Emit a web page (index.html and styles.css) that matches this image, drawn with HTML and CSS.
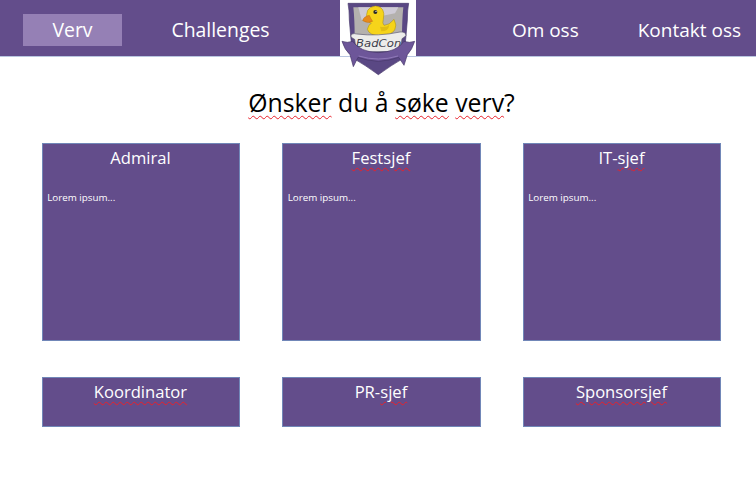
FILE: index.html
```html
<!DOCTYPE html>
<html lang="nb">
<head>
    <meta charset="UTF-8">
    <meta name="viewport" content="width=device-width, initial-scale=1.0">
    <title>BadCon Verv</title>
    <link rel="stylesheet" href="styles.css">
</head>
<body>
    <header class="topbar">
        <nav class="nav-left">
            <a class="nav-item active" href="#">Verv</a>
            <a class="nav-item" href="#">Challenges</a>
        </nav>
        <div class="logo">
            <svg class="logo-mark" viewBox="30 0 228 228" aria-label="BadCon">
                <path d="M145 224 Q105 195 70 175 Q62 120 58 60 Q58 30 54 10 L236 10 Q232 30 232 60 Q228 120 220 175 Q185 195 145 224 Z" fill="#5a4884" stroke="#453669" stroke-width="2"/>
                <path d="M70 22 L220 22 Q216 60 216 110 L74 110 Q74 60 70 22 Z" fill="#b4b1ae"/>
                <path d="M85 22 L205 22 L195 40 L95 60 Z" fill="#cfcbd6"/>
                <path d="M112 62 Q102 22 136 18 Q168 20 160 58 Q156 70 162 76 Q178 76 192 58 Q202 76 194 90 Q184 106 150 108 Q118 106 112 88 Q116 72 124 70 Q116 68 112 62 Z" fill="#f6d41a" stroke="#a38a12" stroke-width="1.5"/>
                <path d="M118 46 Q100 50 98 62 Q114 72 128 64 Q122 56 118 46 Z" fill="#e88a1a" stroke="#a8620f" stroke-width="1"/>
                <circle cx="136" cy="36" r="6" fill="#2a2a2a"/>
                <circle cx="138" cy="34" r="2" fill="white"/>
                <path d="M150 80 Q170 84 178 74 Q176 94 154 94 Z" fill="#e2bd12"/>
                <path d="M62 108 Q66 98 80 102 Q145 110 210 96 Q226 94 228 106 Q222 114 216 116 Q214 146 196 154 L94 156 Q76 148 74 118 Q66 116 62 108 Z" fill="#ececea" stroke="#5b5770" stroke-width="2"/>
                <text class="logo-text" x="146" y="142" text-anchor="middle" textLength="136" lengthAdjust="spacingAndGlyphs">BadCon</text>
                <path d="M36 124 Q52 130 68 124 Q90 156 145 158 Q200 156 222 124 Q238 130 254 124 Q246 150 232 164 L222 196 L206 172 Q178 182 145 184 Q112 182 84 172 L70 200 L60 164 Q44 150 36 124 Z" fill="#6d5699" stroke="#463668" stroke-width="2"/>
                <path d="M86 168 Q145 186 204 168" fill="none" stroke="#8f79b8" stroke-width="3"/>
            </svg>
        </div>
        <nav class="nav-right">
            <a class="nav-item plain" href="#">Om oss</a>
            <a class="nav-item plain" href="#">Kontakt oss</a>
        </nav>
    </header>

    <main>
        <h1 class="page-title"><span class="typo">Ønsker</span> du å <span class="typo">søke</span> <span class="typo">verv</span>?</h1>

        <div class="cards">
            <section class="card tall">
                <h2>Admiral</h2>
                <p>Lorem ipsum...</p>
            </section>
            <section class="card tall">
                <h2><span class="typo">Festsjef</span></h2>
                <p>Lorem ipsum...</p>
            </section>
            <section class="card tall">
                <h2>IT-<span class="typo">sjef</span></h2>
                <p>Lorem ipsum...</p>
            </section>
            <section class="card short">
                <h2><span class="typo">Koordinator</span></h2>
            </section>
            <section class="card short">
                <h2>PR-<span class="typo">sjef</span></h2>
            </section>
            <section class="card short">
                <h2><span class="typo">Sponsorsjef</span></h2>
            </section>
        </div>
    </main>
</body>
</html>
```

FILE: styles.css
```css
body {
    font-family: "Open Sans", "Noto Sans", sans-serif;
    margin: 0;
    padding: 0;
    background-color: white;
    color: black;
}
.topbar {
    display: flex;
    height: 56px;
    background-color: #634d8b;
    border-bottom: 1px solid #b9c6e0;
}
.nav-left {
    display: flex;
    align-items: center;
    gap: 49px;
    width: 340px;
    padding: 4px 0 0 23px;
    box-sizing: border-box;
}
.nav-right {
    display: flex;
    align-items: center;
    justify-content: flex-end;
    gap: 59px;
    flex: 1;
    padding: 4px 15px 0 0;
}
.nav-item {
    width: 99px;
    height: 32px;
    line-height: 32px;
    color: white;
    font-size: 19.4px;
    text-align: center;
    text-decoration: none;
    white-space: nowrap;
}
.nav-item.plain {
    width: auto;
    font-size: 19px;
}
.nav-item.active {
    background-color: #9580b5;
}
.logo {
    position: relative;
    width: 76px;
    background-color: white;
}
.logo-mark {
    position: absolute;
    left: 0;
    top: 0;
    width: 76px;
    height: 76px;
}
.logo-text {
    font-family: "DejaVu Sans", sans-serif;
    font-size: 32px;
    font-style: oblique;
    fill: #3f3f4c;
}
.page-title {
    margin: 27px 0 0;
    padding-left: 7px;
    font-size: 24.8px;
    font-weight: normal;
    line-height: 36px;
    text-align: center;
}
.typo {
    text-decoration: underline wavy #e8202a 1px;
    text-underline-offset: 3px;
}
.cards {
    display: grid;
    grid-template-columns: 198.5px 198.5px 198.5px;
    column-gap: 42px;
    row-gap: 36.5px;
    margin: 23px 0 0 41.7px;
}
.card {
    background-color: #634d8b;
    border: 1px solid #7187b8;
    box-sizing: border-box;
    color: white;
}
.card.tall {
    height: 197.5px;
}
.card.short {
    height: 50px;
}
.card h2 {
    margin: 3px 0 0;
    padding-right: 1px;
    font-size: 16.6px;
    font-weight: normal;
    line-height: 22px;
    text-align: center;
}
.card p {
    margin: 21px 0 0 4.5px;
    font-size: 9.8px;
    line-height: 16px;
}
```
